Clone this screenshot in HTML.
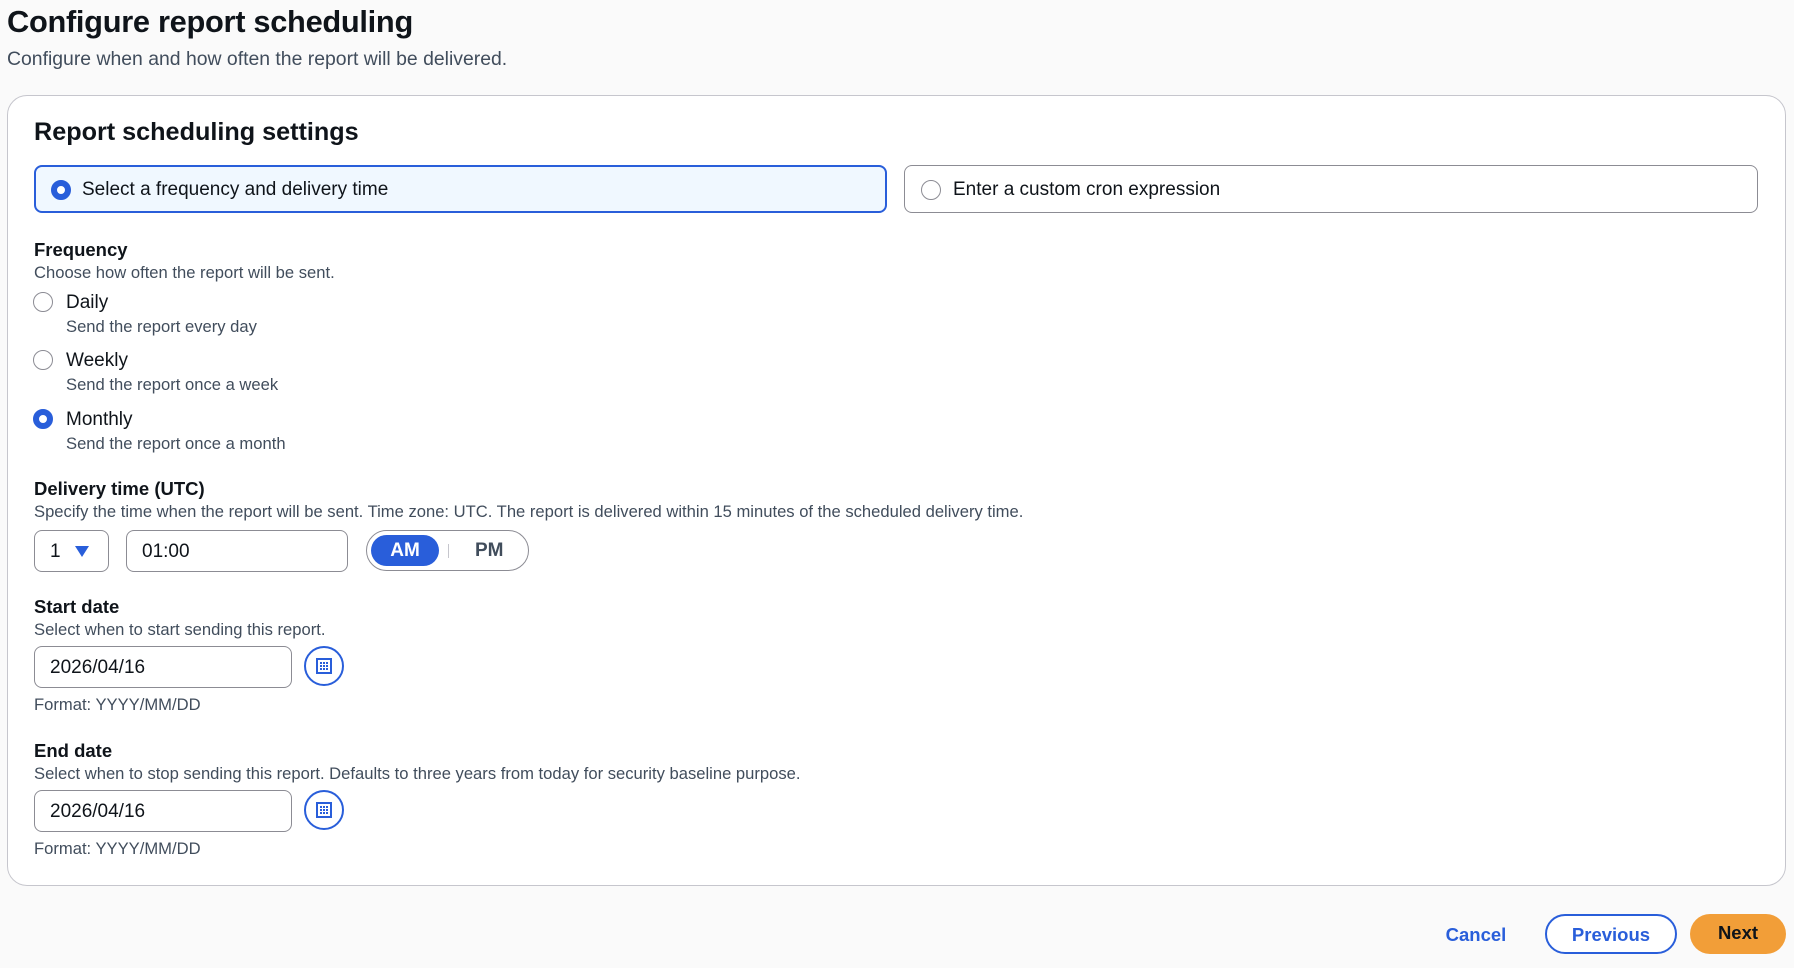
<!DOCTYPE html>
<html><head><meta charset="utf-8"><style>
*{box-sizing:border-box;margin:0;padding:0}
body{width:1794px;height:968px;background:#fafafa;font-family:"Liberation Sans",sans-serif;color:#0f141a;position:relative;overflow:hidden}
.a{position:absolute;white-space:nowrap}
h1{position:absolute;left:7px;top:4px;font-size:30.8px;font-weight:bold;letter-spacing:-0.3px}
.sub{left:7px;top:48px;font-size:19.4px;color:#414d5c}
.card{position:absolute;left:7px;top:95px;width:1779px;height:791px;background:#fff;border:1px solid #c6c6cd;border-radius:20px}
.h2{left:34px;top:118px;font-size:25.2px;font-weight:bold}
.tile{position:absolute;top:165px;height:48px;border:1px solid #8c8c94;border-radius:8px;font-size:19px}
.tile span{position:absolute;left:48px;top:13px}
.rad{position:absolute;width:20px;height:20px;border-radius:50%;border:1.5px solid #8c8c94;background:#fff}
.rad.on{border:6px solid #295eda}
.lab{font-size:18.5px;font-weight:bold}
.desc{font-size:16.6px;color:#414d5c}
.opt{font-size:19px}
.box{position:absolute;border:1px solid #8c8c94;border-radius:8px;background:#fff;font-size:19px}
.cal{position:absolute;width:40px;height:40px;border:2px solid #295eda;border-radius:50%}
.btn{position:absolute;top:914px;height:40px;border-radius:20px;font-size:18.5px;font-weight:bold;text-align:center;line-height:38px}
</style></head><body>
<h1>Configure report scheduling</h1>
<div class="a sub">Configure when and how often the report will be delivered.</div>
<div class="card"></div>
<div class="a h2">Report scheduling settings</div>
<div class="tile" style="left:34px;width:853px;border:2px solid #295eda;background:#f0f8ff"><div class="rad on" style="left:15px;top:13px"></div><span style="left:46px;top:12px">Select a frequency and delivery time</span></div>
<div class="tile" style="left:904px;width:854px"><div class="rad" style="left:16px;top:14px"></div><span>Enter a custom cron expression</span></div>

<div class="a lab" style="left:34px;top:239px">Frequency</div>
<div class="a desc" style="left:34px;top:263px">Choose how often the report will be sent.</div>
<div class="rad" style="left:33px;top:292px"></div><div class="a opt" style="left:66px;top:292px">Daily</div>
<div class="a desc" style="left:66px;top:317px">Send the report every day</div>
<div class="rad" style="left:33px;top:350px"></div><div class="a opt" style="left:66px;top:350px">Weekly</div>
<div class="a desc" style="left:66px;top:375px">Send the report once a week</div>
<div class="rad on" style="left:33px;top:409px"></div><div class="a opt" style="left:66px;top:409px">Monthly</div>
<div class="a desc" style="left:66px;top:434px">Send the report once a month</div>

<div class="a lab" style="left:34px;top:478px">Delivery time (UTC)</div>
<div class="a desc" style="left:34px;top:502px">Specify the time when the report will be sent. Time zone: UTC. The report is delivered within 15 minutes of the scheduled delivery time.</div>
<div class="box" style="left:34px;top:530px;width:75px;height:42px"><span class="a" style="left:15px;top:10px">1</span><svg class="a" style="left:40px;top:15px" width="14" height="11"><path d="M0 0H14L7 11Z" fill="#295eda"/></svg></div>
<div class="box" style="left:126px;top:530px;width:222px;height:42px"><span class="a" style="left:15px;top:10px">01:00</span></div>
<div class="box" style="left:366px;top:530px;width:163px;height:41px;border-radius:21px"><div class="a" style="left:4px;top:4px;width:68px;height:31px;background:#295eda;border-radius:16px;color:#fff;font-weight:bold;text-align:center;line-height:31px">AM</div><div class="a" style="left:81px;top:13px;width:1px;height:14px;background:#c6c6cd"></div><div class="a" style="left:108px;top:9px;font-weight:bold;color:#414d5c">PM</div></div>

<div class="a lab" style="left:34px;top:596px">Start date</div>
<div class="a desc" style="left:34px;top:620px">Select when to start sending this report.</div>
<div class="box" style="left:34px;top:646px;width:258px;height:42px"><span class="a" style="left:15px;top:10px">2026/04/16</span></div>
<div class="cal" style="left:304px;top:646px"><svg class="a" style="left:10px;top:10px" width="16" height="16"><rect x="1" y="1" width="14" height="14" fill="none" stroke="#295eda" stroke-width="2"/><path d="M4 4h2v2H4zM7 4h2v2H7zM10 4h2v2h-2zM4 7h2v2H4zM7 7h2v2H7zM10 7h2v2h-2zM4 10h2v2H4zM7 10h2v2H7zM10 10h2v2h-2z" fill="#295eda"/></svg></div>
<div class="a desc" style="left:34px;top:695px">Format: YYYY/MM/DD</div>

<div class="a lab" style="left:34px;top:740px">End date</div>
<div class="a desc" style="left:34px;top:764px">Select when to stop sending this report. Defaults to three years from today for security baseline purpose.</div>
<div class="box" style="left:34px;top:790px;width:258px;height:42px"><span class="a" style="left:15px;top:10px">2026/04/16</span></div>
<div class="cal" style="left:304px;top:790px"><svg class="a" style="left:10px;top:10px" width="16" height="16"><rect x="1" y="1" width="14" height="14" fill="none" stroke="#295eda" stroke-width="2"/><path d="M4 4h2v2H4zM7 4h2v2H7zM10 4h2v2h-2zM4 7h2v2H4zM7 7h2v2H7zM10 7h2v2h-2zM4 10h2v2H4zM7 10h2v2H7zM10 10h2v2h-2z" fill="#295eda"/></svg></div>
<div class="a desc" style="left:34px;top:839px">Format: YYYY/MM/DD</div>

<div class="btn" style="left:1436px;width:80px;color:#295eda;top:916px">Cancel</div>
<div class="btn" style="left:1545px;width:132px;border:2px solid #295eda;color:#295eda;background:#fff">Previous</div>
<div class="btn" style="left:1690px;width:96px;background:#f29e38;color:#0f141a">Next</div>
</body></html>
